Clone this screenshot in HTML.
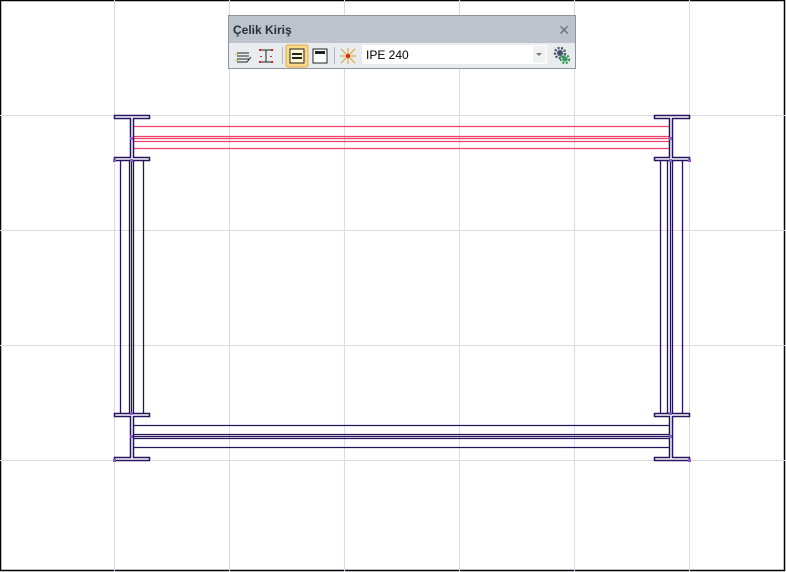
<!DOCTYPE html>
<html><head><meta charset="utf-8"><style>
html,body{margin:0;padding:0;background:#fff;}
body{width:786px;height:572px;overflow:hidden;position:relative;}
svg{position:absolute;left:0;top:0;}
.tb{position:absolute;left:228px;top:15px;width:346px;height:52px;border:1px solid #8e949c;background:#e9ecef;font-family:"Liberation Sans",sans-serif;}
.tt{height:27px;background:#bcc3cc;font-size:12px;font-weight:bold;color:#2a2e35;line-height:28px;padding-left:4px;position:relative;}
.tt .x{position:absolute;right:5px;top:0;font-weight:normal;color:#6b7079;font-size:14px;}
.inp{position:absolute;left:133px;top:29px;width:185px;height:19px;background:#fff;font-size:12px;line-height:20px;padding-left:4px;box-sizing:border-box;color:#000;}
.dd{position:absolute;left:304px;top:30px;width:13px;height:17px;background:#f0f1f3;}
</style></head><body>
<svg width="786" height="572" viewBox="0 0 786 572">
<rect x="0.5" y="0.5" width="784" height="570" fill="#fff" stroke="#000" stroke-width="1.5"/>
<g stroke="#dcd9ea" stroke-width="1">
<line x1="114.5" y1="0" x2="114.5" y2="572"/><line x1="229.5" y1="0" x2="229.5" y2="572"/><line x1="344.5" y1="0" x2="344.5" y2="572"/><line x1="459.5" y1="0" x2="459.5" y2="572"/><line x1="574.5" y1="0" x2="574.5" y2="572"/><line x1="689.5" y1="0" x2="689.5" y2="572"/>
<line x1="0" y1="115.5" x2="786" y2="115.5"/><line x1="0" y1="230.5" x2="786" y2="230.5"/><line x1="0" y1="345.5" x2="786" y2="345.5"/><line x1="0" y1="460.5" x2="786" y2="460.5"/>
</g>
<g stroke="#f0406a" stroke-width="1.2" fill="none">
<line x1="133" y1="126.5" x2="670" y2="126.5"/><line x1="133" y1="136.5" x2="670" y2="136.5"/><line x1="133" y1="138.5" x2="670" y2="138.5"/><line x1="133" y1="141.5" x2="670" y2="141.5"/><line x1="133" y1="148.5" x2="670" y2="148.5"/>
</g>
<g stroke="#24145e" stroke-width="1.3" fill="none">
<line x1="133" y1="425.5" x2="670" y2="425.5"/><line x1="133" y1="434.5" x2="670" y2="434.5"/><line x1="133" y1="436.5" x2="670" y2="436.5"/><line x1="133" y1="438.5" x2="670" y2="438.5"/><line x1="133" y1="447.5" x2="670" y2="447.5"/>
<line x1="120.5" y1="160" x2="120.5" y2="413"/><line x1="129.5" y1="160" x2="129.5" y2="413"/><line x1="131.5" y1="160" x2="131.5" y2="413"/><line x1="133.5" y1="160" x2="133.5" y2="413"/><line x1="143.5" y1="160" x2="143.5" y2="413"/>
<line x1="660.5" y1="160" x2="660.5" y2="413"/><line x1="667.5" y1="160" x2="667.5" y2="413"/><line x1="670.5" y1="160" x2="670.5" y2="413"/><line x1="672.5" y1="160" x2="672.5" y2="413"/><line x1="682.5" y1="160" x2="682.5" y2="413"/>
</g>
<g stroke="#24145e" stroke-width="1.5" fill="#fff">
<path d="M114.5 115.5H149.5V118.5H133.5V157.5H149.5V160.5H114.5V157.5H130.5V118.5H114.5Z"/>
<path d="M114.5 413.5H149.5V416.5H133.5V457.5H149.5V460.5H114.5V457.5H130.5V416.5H114.5Z"/>
<path d="M654.5 115.5H689.5V118.5H672.5V157.5H689.5V160.5H654.5V157.5H669.5V118.5H654.5Z"/>
<path d="M654.5 413.5H689.5V416.5H672.5V457.5H689.5V460.5H654.5V457.5H669.5V416.5H654.5Z"/>
</g>
<g fill="#8a5ac8">
<rect x="130" y="137" width="3" height="3"/><rect x="669" y="137" width="3" height="3"/><rect x="130" y="435" width="3" height="3"/><rect x="669" y="435" width="3" height="3"/>
<rect x="113" y="159" width="3" height="3"/><rect x="130" y="159" width="3" height="3"/><rect x="669" y="159" width="3" height="3"/><rect x="688" y="159" width="3" height="3"/>
<rect x="669" y="412" width="3" height="3"/><rect x="130" y="412" width="3" height="3"/><rect x="113" y="459" width="3" height="3"/><rect x="688" y="459" width="3" height="3"/>
</g>
</svg>
<div class="tb">
<div class="tt">Çelik Kiriş<span class="x">✕</span></div>
<svg width="346" height="25" style="top:27px">
<g stroke="#222" stroke-width="1" fill="none">
<path d="M8 10H20M8 13H20M8 16H20M8 19H18L22 14"/>
<path d="M31 7H43M31 19H43M37 7V19"/>
</g>
<g fill="#f5c400"><rect x="6" y="11" width="3" height="1"/><rect x="6" y="17" width="3" height="1"/></g>
<g fill="#e02020"><rect x="31" y="13" width="2" height="1"/><rect x="41" y="13" width="2" height="1"/><rect x="30" y="6" width="2" height="2"/><rect x="42" y="6" width="2" height="2"/><rect x="30" y="18" width="2" height="2"/><rect x="42" y="18" width="2" height="2"/></g>
<line x1="53.5" y1="4" x2="53.5" y2="21" stroke="#b0b4ba"/>
<rect x="57" y="2" width="22" height="22" rx="2" fill="#fbd98a" stroke="#e0a84a"/>
<rect x="61" y="6" width="14" height="14" fill="#fff6d0" stroke="#222"/><rect x="63" y="10" width="10" height="2" fill="#222"/><rect x="63" y="14" width="10" height="2" fill="#222"/>
<rect x="84" y="6" width="14" height="14" fill="#fff" stroke="#222"/><rect x="86" y="8" width="10" height="3" fill="#222"/>
<line x1="105.5" y1="4" x2="105.5" y2="21" stroke="#b0b4ba"/>
<g stroke="#e0a020" stroke-width="1"><path d="M112 6L126 20M126 6L112 20M119 5V21M111 13H127"/></g>
<circle cx="119" cy="13" r="2" fill="#e02020"/>
</svg>
<div class="inp">IPE 240</div><div class="dd"><span style="position:absolute;left:3px;top:7px;border-left:3px solid transparent;border-right:3px solid transparent;border-top:3px solid #777;"></span></div>
<svg width="20" height="20" style="position:absolute;left:323px;top:30px">
<circle cx="8" cy="7" r="5" fill="none" stroke="#4a5070" stroke-width="2.5" stroke-dasharray="2 1.5"/><circle cx="8" cy="7" r="3" fill="#4a5070"/>
<circle cx="13" cy="13" r="4" fill="none" stroke="#3a9a5a" stroke-width="2.5" stroke-dasharray="2 1.5"/><circle cx="13" cy="13" r="2.5" fill="#3a9a5a"/>
</svg>
</div>
</body></html>
